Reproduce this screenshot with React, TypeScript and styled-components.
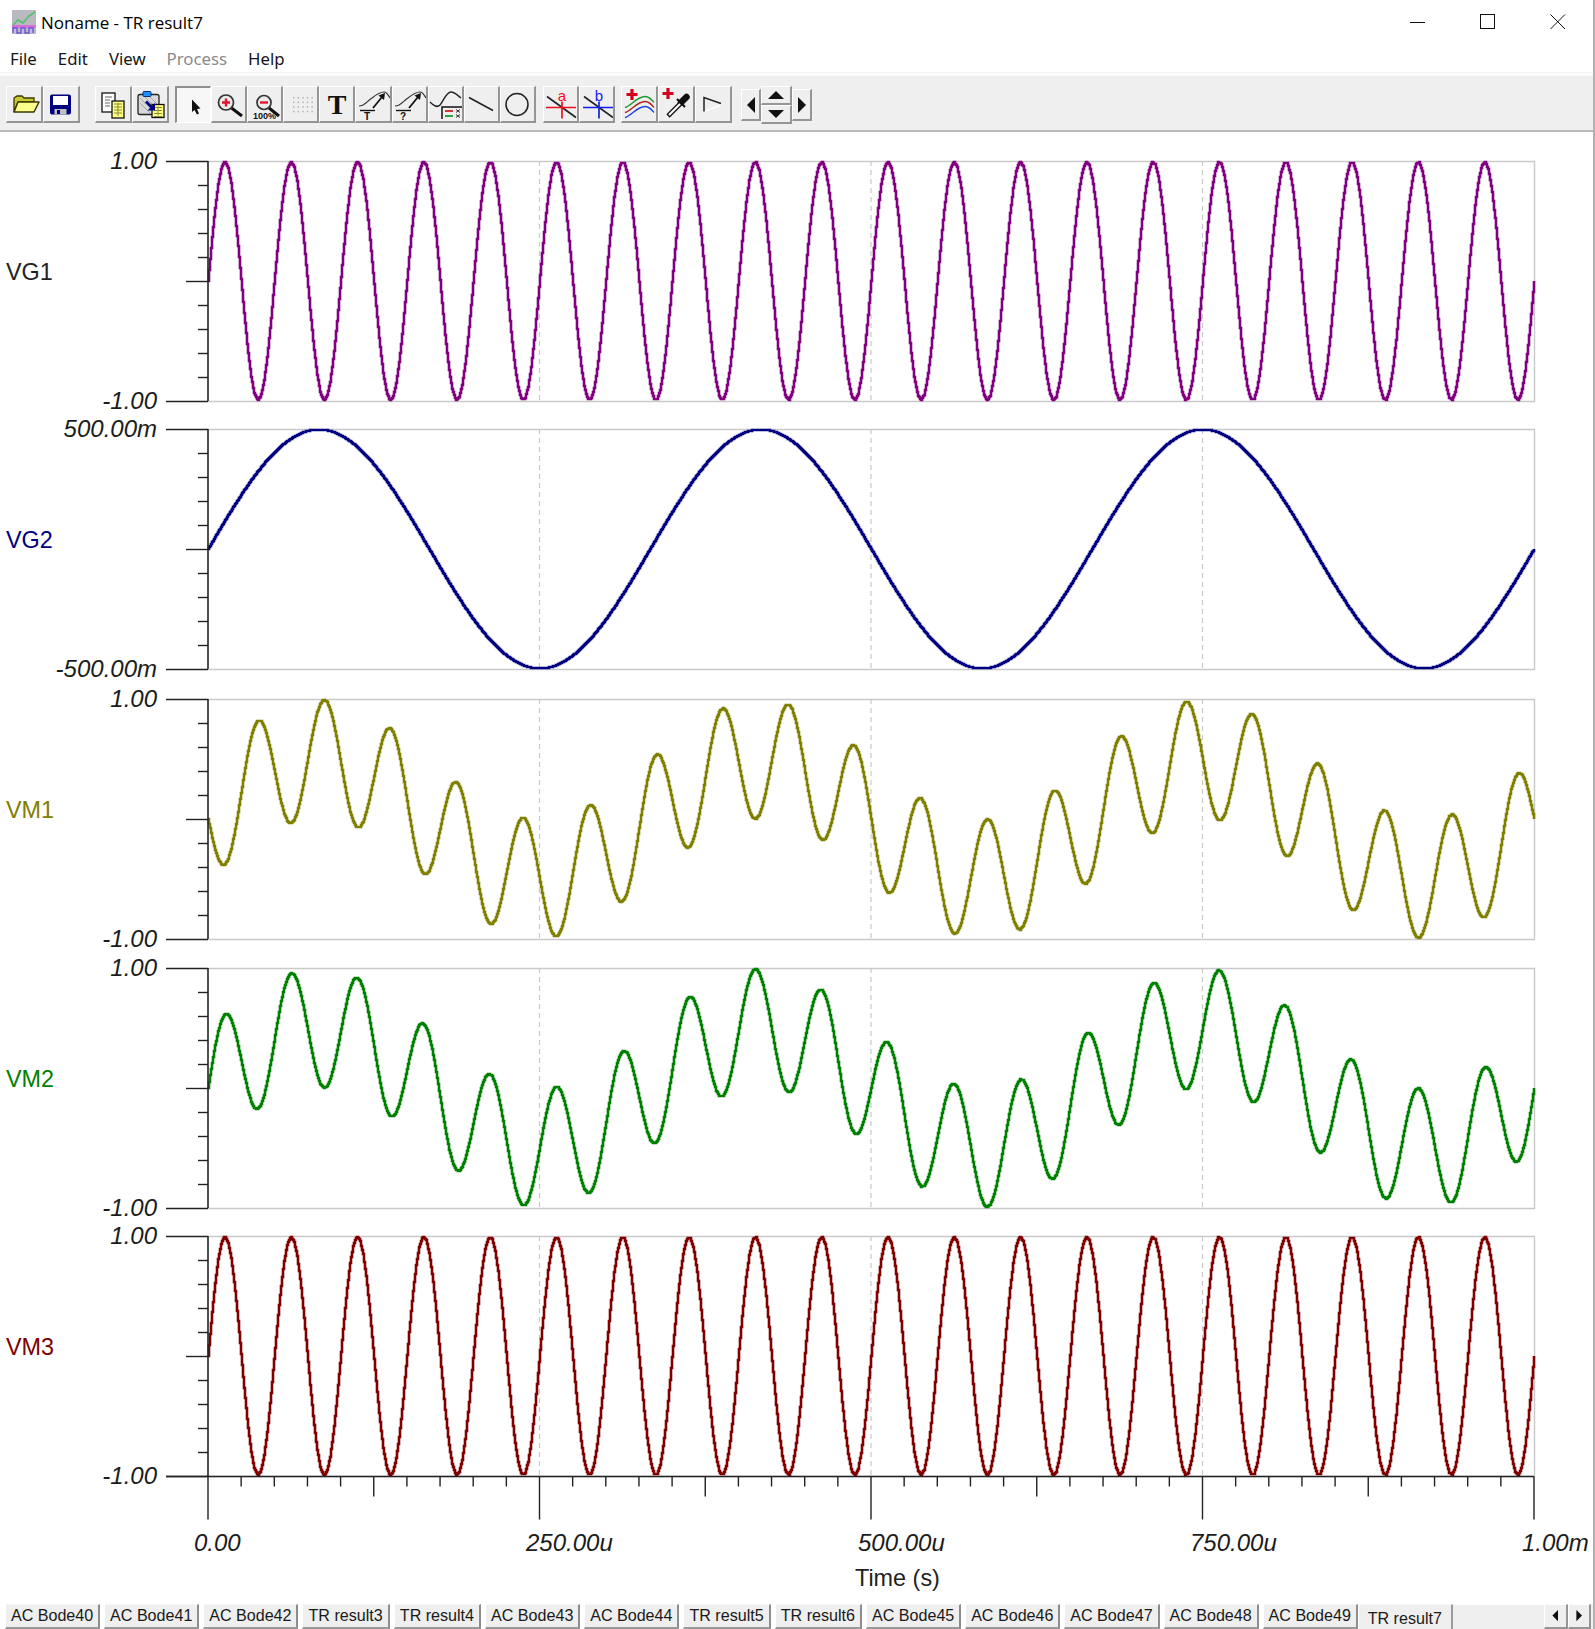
import * as React from "react";
import styled, { createGlobalStyle } from "styled-components";

const GlobalStyle = createGlobalStyle`
  html, body {
    margin: 0;
    padding: 0;
    background: #fff;
    overflow: hidden;
  }
`;

const Window = styled.div`
  display: flex;
  flex-direction: column;
  width: 1595px;
  height: 1629px;
  box-sizing: border-box;
  border-right: 2px solid #b0b0b0;
  background: #fff;
  color: #000;
  font-family: "Open Sans", "Liberation Sans", sans-serif;
  overflow: hidden;
`;

const TitleBar = styled.div`
  display: flex;
  align-items: center;
  height: 48px;
  flex: none;
  padding: 0 0 4px 12px;
  box-sizing: border-box;
`;

const TitleText = styled.span`
  margin-left: 5px;
  font-size: 17px;
  flex: 1;
`;

const WindowControls = styled.div`
  display: flex;
`;

const WindowButton = styled.button`
  display: flex;
  align-items: center;
  justify-content: center;
  width: 70px;
  height: 44px;
  padding: 0;
  border: none;
  background: none;
`;

const MenuBar = styled.div`
  display: flex;
  align-items: center;
  gap: 21px;
  height: 24px;
  flex: none;
  padding: 0 0 4px 10px;
  box-sizing: border-box;
`;

const MenuItem = styled.span<{ $disabled?: boolean }>`
  font-family: "Noto Sans", "Liberation Sans", sans-serif;
  font-size: 16.8px;
  color: ${(p) => (p.$disabled ? "#8a8a8a" : "#161616")};
`;

const Toolbar = styled.div`
  display: flex;
  align-items: flex-start;
  height: 60px;
  flex: none;
  box-sizing: border-box;
  padding: 13px 0 0 6px;
  background: #efefef;
  border-top: 1px solid #f4f4f4;
  border-bottom: 2px solid #b9b9b9;
  box-shadow: inset 0 3px 0 #fbfbfb;
`;

const ButtonGroup = styled.div<{ $gap: number }>`
  display: flex;
  margin-right: ${(p) => p.$gap}px;
`;

const ToolButton = styled.div<{ $pressed?: boolean; $wide?: boolean }>`
  display: flex;
  align-items: center;
  justify-content: center;
  flex: none;
  width: ${(p) => (p.$wide ? 37 : 36.1)}px;
  height: 37px;
  box-sizing: border-box;
  overflow: hidden;
  background: ${(p) => (p.$pressed ? "#f7f7f7" : "#efefef")};
  border-style: solid;
  border-width: ${(p) => (p.$pressed ? "2px 1px 1px 2px" : "1px 2px 2px 1px")};
  border-color: ${(p) =>
    p.$pressed ? "#8f8f8f #fff #fff #8f8f8f" : "#fff #959595 #959595 #fff"};

  svg {
    flex: none;
  }
`;

const NavPad = styled.div`
  display: flex;
  align-items: center;
  margin-left: 3px;
`;

const NavSide = styled(ToolButton)`
  width: 20px;
  height: 32px;
`;

const NavColumn = styled.div`
  display: flex;
  flex-direction: column;
`;

const NavCenter = styled(ToolButton)`
  width: 31px;
  height: 19px;
`;

const ChartArea = styled.svg`
  display: block;
  flex: none;
  width: 1593px;
  height: 1472px;
`;

const AxisText = styled.text`
  font-family: "Liberation Sans", Arial, sans-serif;
  font-size: 24px;
  font-style: italic;
  fill: #1c1c1c;
`;

const SeriesText = styled.text<{ $color: string }>`
  font-family: "Liberation Sans", Arial, sans-serif;
  font-size: 23.4px;
  fill: ${(p) => p.$color};
`;

const TabBar = styled.div`
  display: flex;
  flex: none;
  height: 25px;
  padding-left: 5px;
`;

const Tab = styled.div<{ $active?: boolean; $width: number }>`
  flex: none;
  box-sizing: border-box;
  width: ${(p) => p.$width}px;
  height: 25px;
  margin: ${(p) => (p.$active ? "0 0 0 -4px" : "0 4px 0 0")};
  padding-top: ${(p) => (p.$active ? 4 : 1)}px;
  text-align: center;
  font-family: "Liberation Sans", Arial, sans-serif;
  font-size: 16.1px;
  line-height: 19px;
  color: #1a1a1a;
  background: #efefef;
  border-top: 1px solid #f8f8f8;
  border-right: 2px solid ${(p) => (p.$active ? "#9a9a9a" : "#8d8d8d")};
  border-bottom: ${(p) => (p.$active ? "none" : "2px solid #9a9a9a")};
  border-left: 1px solid #fff;
`;

const TabFiller = styled.div`
  flex: 1;
  background: #efefef;
  border-top: 1px solid #fff;
`;

const TabScroll = styled.div`
  display: flex;
  padding-right: 2px;
  background: #efefef;
`;

const TabArrow = styled.div`
  display: flex;
  align-items: center;
  justify-content: center;
  width: 23.5px;
  box-sizing: border-box;
  border-top: 1px solid #fff;
  border-left: 1px solid #fff;
  border-right: 2px solid #959595;
  border-bottom: 2px solid #959595;
`;

// chart geometry, in window pixels
const X0 = 208;
const X1 = 1534;
const GRAY = "#c9c9c9";
const AXIS = "#222";

const wave = (f: number, t: number) => Math.sin(2 * Math.PI * f * t);

interface Plot {
  name: string;
  color: string;
  labelColor: string;
  top: number;
  bottom: number;
  hi: string;
  lo: string;
  fn: (t: number) => number;
}

const plots: Plot[] = [
  { name: "VG1", color: "#800080", labelColor: "#222", top: 161, bottom: 401, hi: "1.00", lo: "-1.00", fn: (t) => wave(20, t) },
  { name: "VG2", color: "#000080", labelColor: "#000080", top: 429, bottom: 669, hi: "500.00m", lo: "-500.00m", fn: (t) => wave(3, t) },
  { name: "VM1", color: "#808000", labelColor: "#808000", top: 699, bottom: 939, hi: "1.00", lo: "-1.00", fn: (t) => 0.5 * wave(3, t) - 0.5 * wave(20, t) },
  { name: "VM2", color: "#008000", labelColor: "#008000", top: 968, bottom: 1208, hi: "1.00", lo: "-1.00", fn: (t) => 0.5 * wave(3, t) + 0.5 * wave(20, t) },
  { name: "VM3", color: "#800000", labelColor: "#800000", top: 1236, bottom: 1476, hi: "1.00", lo: "-1.00", fn: (t) => wave(20, t) },
];

const tabs = [
  "AC Bode40", "AC Bode41", "AC Bode42", "TR result3", "TR result4", "AC Bode43", "AC Bode44",
  "TR result5", "TR result6", "AC Bode45", "AC Bode46", "AC Bode47", "AC Bode48", "AC Bode49",
];

function tracePath(plot: Plot) {
  const mid = (plot.top + plot.bottom) / 2;
  const amp = (plot.bottom - plot.top) / 2 - 0.5;
  const step = 3.3;
  const at = (x: number) => {
    const a = Math.floor((x - X0) / step);
    const ya = plot.fn((a * step) / (X1 - X0));
    const yb = plot.fn(((a + 1) * step) / (X1 - X0));
    const k = (x - X0) / step - a;
    return Math.round(mid - amp * (ya + (yb - ya) * k));
  };
  let d = `M${X0} ${Math.round(mid)}`;
  for (let x = X0 + 1; x <= X1; x++) {
    d += `H${x}V${at(x)}`;
  }
  return d;
}

function PlotView({ plot }: { plot: Plot }) {
  const { top, bottom } = plot;
  const h = (bottom - top) / 10;
  const ticks = Array.from({ length: 11 }, (_, i) => i);
  return (
    <g>
      <path d={`M${X0} ${top + 0.5}H${X1 + 0.5}V${bottom + 0.5}H${X0}`} fill="none" stroke={GRAY} strokeWidth={1.4} />
      {[0.25, 0.5, 0.75].map((f) => (
        <line
          key={f}
          x1={X0 + f * (X1 - X0)}
          x2={X0 + f * (X1 - X0)}
          y1={top}
          y2={bottom}
          stroke={GRAY}
          strokeWidth={1.2}
          strokeDasharray="5 4"
        />
      ))}
      <path d={tracePath(plot)} fill="none" stroke={plot.color} strokeWidth={2.6} />
      <line x1={X0} x2={X0} y1={top} y2={bottom} stroke={AXIS} strokeWidth={1.6} />
      {ticks.map((i) => {
        const len = i === 0 || i === 10 ? 42 : i === 5 ? 22 : 10;
        const y = top + i * h + 0.5;
        return <line key={i} x1={X0 - len} x2={X0} y1={y} y2={y} stroke={AXIS} strokeWidth={1.4} />;
      })}
      <AxisText x={157} y={top + 8} textAnchor="end">{plot.hi}</AxisText>
      <AxisText x={157} y={bottom + 8} textAnchor="end">{plot.lo}</AxisText>
      <SeriesText x={6} y={(top + bottom) / 2 - 1} $color={plot.labelColor}>{plot.name}</SeriesText>
    </g>
  );
}

function TimeAxis() {
  const axisY = 1476.5;
  const step = (X1 - X0) / 40;
  return (
    <g>
      <line x1={166} x2={X1} y1={axisY} y2={axisY} stroke={AXIS} strokeWidth={1.4} />
      {Array.from({ length: 41 }, (_, i) => {
        const x = X0 + i * step;
        const len = i % 10 === 0 ? 43 : i % 5 === 0 ? 20 : 10;
        return <line key={i} x1={x} x2={x} y1={axisY} y2={axisY + len} stroke={AXIS} strokeWidth={1.4} />;
      })}
      <AxisText x={194} y={1551}>0.00</AxisText>
      <AxisText x={526} y={1551}>250.00u</AxisText>
      <AxisText x={858} y={1551}>500.00u</AxisText>
      <AxisText x={1190} y={1551}>750.00u</AxisText>
      <AxisText x={1522} y={1551}>1.00m</AxisText>
      <SeriesText x={855} y={1585.5} $color="#222">Time (s)</SeriesText>
    </g>
  );
}

const Icon = ({ children }: { children: React.ReactNode }) => (
  <svg width={32} height={32} viewBox="0 0 32 32" overflow="visible">
    {children}
  </svg>
);

const AppIcon = () => (
  <svg width={24} height={24} viewBox="0 0 24 24">
    <rect width={24} height={24} fill="#b9b9c0" />
    <path d="M1 15L6 10L11 13L17 6L23 2" fill="none" stroke="#4fc36a" strokeWidth={1.6} />
    <rect y={15} width={24} height={3} fill="#d86fd8" />
    <path d="M1 23V18H5V23H9V18H13V23H17V18H21V23" fill="#c9b4ee" stroke="#6a5ad0" strokeWidth={1.4} />
  </svg>
);

const FolderIcon = () => (
  <Icon>
    <path d="M6 24V10L9 8H14L16 10H26V14H10L6 24Z" fill="#c8c832" stroke="#3a3a00" strokeWidth={1.3} />
    <path d="M6 24L10 14H31L26 24Z" fill="#ffff8c" stroke="#3a3a00" strokeWidth={1.5} strokeLinejoin="round" />
  </Icon>
);

const SaveIcon = () => (
  <Icon>
    <rect x={5} y={6.5} width={21} height={20} rx={2} fill="#000080" />
    <rect x={8} y={8} width={15} height={9} fill="#fff" />
    <rect x={9.5} y={21} width={12} height={5.5} fill="#c0c0c0" />
    <rect x={12} y={22} width={3} height={4} fill="#000080" />
  </Icon>
);

const GridLines = ({ x, y, w, h }: { x: number; y: number; w: number; h: number }) => (
  <g>
    <rect x={x} y={y} width={w} height={h} fill="#ffff80" stroke="#111" strokeWidth={1.3} />
    {[3, 6, 9, 12].filter((d) => d < h).map((d) => (
      <line key={d} x1={x + 2} x2={x + w - 2} y1={y + d} y2={y + d} stroke="#8a8a3a" strokeWidth={1} />
    ))}
    <line x1={x + w / 2} x2={x + w / 2} y1={y + 2} y2={y + h - 2} stroke="#8a8a3a" strokeWidth={1} />
  </g>
);

const CopyIcon = () => (
  <Icon>
    <rect x={5} y={5} width={13} height={19} fill="#fff" stroke="#111" strokeWidth={1.3} />
    <path d="M8 9H15M8 12H13M8 15H13M8 18H13" stroke="#666" strokeWidth={1} />
    <GridLines x={15} y={13} w={12} h={17} />
  </Icon>
);

const PasteIcon = () => (
  <Icon>
    <rect x={4} y={6.5} width={21} height={20} rx={2} fill="#d8d8d8" stroke="#222" strokeWidth={1.3} />
    <path d="M6 10L21 25M6 15L16 25M10 8L24 22M15 8L24 17" stroke="#a5a5a5" strokeWidth={1} />
    <rect x={9} y={3.5} width={8} height={5} rx={1} fill="#1e90ff" stroke="#00307a" strokeWidth={1} />
    <GridLines x={18} y={16.5} w={12} h={13} />
    <path d="M12 13.5L19 20.5" stroke="#000080" strokeWidth={2.6} />
    <path d="M21 15V22.5H13.5Z" fill="#000080" />
  </Icon>
);

const SelectIcon = () => (
  <Icon>
    <path d="M14 10.5V23L16.5 21L19 25.5L21 24.5L19 20L22.5 19.5Z" fill="#111" />
  </Icon>
);

const ZoomInIcon = () => (
  <Icon>
    <path d="M18.5 20L29 28" stroke="#111" strokeWidth={3} />
    <circle cx={13} cy={14.5} r={7.5} fill="#eaeaea" stroke="#333" strokeWidth={1.7} />
    <path d="M9 14.5H17M13 10.5V18.5" stroke="#e0142c" strokeWidth={2.4} />
  </Icon>
);

const Zoom100Icon = () => (
  <Icon>
    <path d="M20 20L30 28" stroke="#111" strokeWidth={3} />
    <circle cx={15} cy={14.5} r={7} fill="#eaeaea" stroke="#333" strokeWidth={1.7} />
    <path d="M11 14.5H19" stroke="#e0142c" strokeWidth={2.4} />
    <text x={4} y={31} fontFamily="Liberation Sans" fontSize={9} fontWeight={700} fill="#111">100%</text>
  </Icon>
);

const DotsIcon = () => (
  <Icon>
    {[0, 1, 2, 3, 4].map((c) =>
      [0, 1, 2, 3].map((r) => (
        <rect key={`${c}-${r}`} x={8 + c * 4.6} y={9 + r * 4.6} width={1.5} height={1.5} fill="#b2b2b2" />
      ))
    )}
  </Icon>
);

const TextIcon = () => (
  <Icon>
    <text x={16} y={26} textAnchor="middle" fontFamily="Liberation Serif" fontSize={28} fontWeight={700} fill="#111">T</text>
  </Icon>
);

const CurveIcon = ({ mark }: { mark: string }) => (
  <Icon>
    <path d="M2 18C8 18 10 13 15 10C20 6 24 4 27 4C30 4 31 7 33 10" fill="none" stroke="#333" strokeWidth={1.2} />
    <path d="M16 20L25 9" stroke="#111" strokeWidth={1.8} />
    <path d="M28 5L27 12L21.5 7.5Z" fill="#111" />
    <path d="M3 22.5H18" stroke="#111" strokeWidth={1.4} />
    <text x={10} y={32} textAnchor="middle" fontFamily="Liberation Sans" fontSize={10} fontWeight={700} fill="#111">{mark}</text>
  </Icon>
);

const LegendIcon = () => (
  <Icon>
    <path d="M1 14C5 18 8 20 11 17C14 14 17 4 22 4C26 4 29 8 32 10" fill="none" stroke="#222" strokeWidth={1.4} />
    <path d="M13 31V19H33" fill="#efefef" stroke="#111" strokeWidth={1.5} />
    <path d="M16 23H24" stroke="#d02020" strokeWidth={1.8} />
    <path d="M16 28H24" stroke="#1a9a2a" strokeWidth={1.8} />
    <path d="M27 21.5L31 24.5M31 21.5L27 24.5M27 26.5L31 29.5M31 26.5L27 29.5" stroke="#333" strokeWidth={1} />
  </Icon>
);

const LineIcon = () => (
  <Icon>
    <path d="M4 9.5L28 22.5" stroke="#222" strokeWidth={1.6} />
  </Icon>
);

const CircleIcon = () => (
  <Icon>
    <circle cx={16} cy={16.5} r={11} fill="none" stroke="#222" strokeWidth={1.5} />
  </Icon>
);

const CursorIcon = ({ color, mark }: { color: string; mark: string }) => (
  <Icon>
    <path d="M3 8.5L32 29.5" stroke="#222" strokeWidth={1.6} />
    <path d="M2 19.5H32M18 13.5V30.5" stroke={color} strokeWidth={1.7} />
    <text x={18} y={12.5} textAnchor="middle" fontFamily="Liberation Sans" fontSize={15} fill={color}>{mark}</text>
  </Icon>
);

const Plus = ({ x, y }: { x: number; y: number }) => (
  <path d={`M${x - 5.5} ${y}H${x + 5.5}M${x} ${y - 5.5}V${y + 5.5}`} stroke="#d4001a" strokeWidth={3.2} />
);

const waveLines: [string, number][] = [["#1a9a2a", 0], ["#b02020", 5], ["#2040e0", 10]];

const AddWaveIcon = () => (
  <Icon>
    <Plus x={9} y={6.5} />
    {waveLines.map(([c, dy]) => (
      <path
        key={c}
        d={`M2 ${19.5 + dy}C8 ${18 + dy} 14 ${8.5 + dy} 22 ${8.5 + dy}C26 ${8.5 + dy} 28 ${11 + dy} 31 ${14.5 + dy}`}
        fill="none"
        stroke={c}
        strokeWidth={1.4}
      />
    ))}
  </Icon>
);

const DropperIcon = () => (
  <Icon>
    <Plus x={8} y={5.5} />
    <path d="M21 14.5L26.5 9" stroke="#111" strokeWidth={6.5} strokeLinecap="round" />
    <path d="M17 11L25 19" stroke="#111" strokeWidth={2.2} />
    <path d="M20 16L8 28" stroke="#111" strokeWidth={4.6} />
    <path d="M20 16L9 27" stroke="#fff" strokeWidth={2.2} />
  </Icon>
);

const FlagIcon = () => (
  <Icon>
    <path d="M7.5 23.5L24 17" stroke="#fff" strokeWidth={1.6} />
    <path d="M7 23.5V9.5L24 15.5" fill="none" stroke="#222" strokeWidth={1.5} />
  </Icon>
);

const Arrow = ({ dir, size = 10 }: { dir: "left" | "right" | "up" | "down"; size?: number }) => {
  const shapes = { left: "10,0 10,16 2,8", right: "2,0 2,16 10,8", up: "0,11 16,11 8,3", down: "0,3 16,3 8,11" };
  const box = dir === "left" || dir === "right" ? [12, 16] : [16, 14];
  return (
    <svg width={(box[0] * size) / 10} height={(box[1] * size) / 10} viewBox={`0 0 ${box[0]} ${box[1]}`}>
      <polygon points={shapes[dir]} fill="#111" />
    </svg>
  );
};

export default function App() {
  return (
    <>
      <GlobalStyle />
      <Window>
        <TitleBar>
          <AppIcon />
          <TitleText>Noname - TR result7</TitleText>
          <WindowControls>
            <WindowButton aria-label="Minimize">
              <svg width={16} height={16}><path d="M0 8.5H15" stroke="#111" /></svg>
            </WindowButton>
            <WindowButton aria-label="Maximize">
              <svg width={16} height={16}><rect x={0.5} y={0.5} width={14} height={14} fill="none" stroke="#111" /></svg>
            </WindowButton>
            <WindowButton aria-label="Close">
              <svg width={16} height={16}><path d="M0.5 0.5L15 15M15 0.5L0.5 15" stroke="#111" /></svg>
            </WindowButton>
          </WindowControls>
        </TitleBar>
        <MenuBar>
          <MenuItem>File</MenuItem>
          <MenuItem>Edit</MenuItem>
          <MenuItem>View</MenuItem>
          <MenuItem $disabled>Process</MenuItem>
          <MenuItem>Help</MenuItem>
        </MenuBar>
        <Toolbar>
          <ButtonGroup $gap={15}>
            <ToolButton $wide><FolderIcon /></ToolButton>
            <ToolButton $wide><SaveIcon /></ToolButton>
          </ButtonGroup>
          <ButtonGroup $gap={6}>
            <ToolButton $wide><CopyIcon /></ToolButton>
            <ToolButton $wide><PasteIcon /></ToolButton>
          </ButtonGroup>
          <ButtonGroup $gap={7}>
            <ToolButton $pressed><SelectIcon /></ToolButton>
            <ToolButton><ZoomInIcon /></ToolButton>
            <ToolButton><Zoom100Icon /></ToolButton>
            <ToolButton><DotsIcon /></ToolButton>
            <ToolButton><TextIcon /></ToolButton>
            <ToolButton><CurveIcon mark="T" /></ToolButton>
            <ToolButton><CurveIcon mark="?" /></ToolButton>
            <ToolButton><LegendIcon /></ToolButton>
            <ToolButton><LineIcon /></ToolButton>
            <ToolButton><CircleIcon /></ToolButton>
          </ButtonGroup>
          <ButtonGroup $gap={6}>
            <ToolButton><CursorIcon color="#f01020" mark="a" /></ToolButton>
            <ToolButton><CursorIcon color="#1020f0" mark="b" /></ToolButton>
          </ButtonGroup>
          <ButtonGroup $gap={6}>
            <ToolButton $wide><AddWaveIcon /></ToolButton>
            <ToolButton $wide><DropperIcon /></ToolButton>
            <ToolButton $wide><FlagIcon /></ToolButton>
          </ButtonGroup>
          <NavPad>
            <NavSide><Arrow dir="left" /></NavSide>
            <NavColumn>
              <NavCenter><Arrow dir="up" /></NavCenter>
              <NavCenter><Arrow dir="down" /></NavCenter>
            </NavColumn>
            <NavSide><Arrow dir="right" /></NavSide>
          </NavPad>
        </Toolbar>
        <ChartArea viewBox="0 132 1593 1472">
          {plots.map((plot) => (
            <PlotView key={plot.name} plot={plot} />
          ))}
          <TimeAxis />
        </ChartArea>
        <TabBar>
          {tabs.map((name) => (
            <Tab key={name} $width={name.startsWith("AC") ? 95.15 : 87.35}>{name}</Tab>
          ))}
          <Tab $active $width={95}>TR result7</Tab>
          <TabFiller />
          <TabScroll>
            <TabArrow><Arrow dir="left" size={7} /></TabArrow>
            <TabArrow><Arrow dir="right" size={7} /></TabArrow>
          </TabScroll>
        </TabBar>
      </Window>
    </>
  );
}
